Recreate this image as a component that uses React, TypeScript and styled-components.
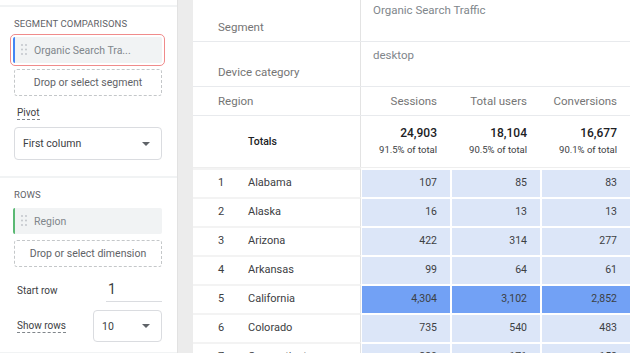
import { FC } from 'react';
import styled, { createGlobalStyle } from 'styled-components';

const GlobalStyle = createGlobalStyle`
  html, body {
    margin: 0;
    padding: 0;
    background: #ffffff;
    font-family: Roboto, 'Liberation Sans', Arial, sans-serif;
    overflow: hidden;
  }
`;

const Page = styled.div`
  display: flex;
  width: 630px;
  height: 353px;
  overflow: hidden;
`;

/* ---------- left settings panel ---------- */

const Panel = styled.aside`
  width: 177px;
  flex-shrink: 0;
  display: flex;
  flex-direction: column;
  background: #ffffff;
`;

const TopStrip = styled.div`
  height: 5px;
  flex-shrink: 0;
  border-bottom: 2px solid #f1f3f4;
`;

const Section = styled.section<{ bottom?: number }>`
  flex-shrink: 0;
  padding: 10px 15px ${({ bottom }) => bottom ?? 16}px 14px;
  border-bottom: 2px solid #f1f3f4;
  display: flex;
  flex-direction: column;
`;

const SectionTitle = styled.div`
  font-size: 9.5px;
  line-height: 14px;
  letter-spacing: 0.1px;
  color: #5f6368;
  text-transform: uppercase;
`;

const Chip = styled.div<{ bar: string; selected?: boolean }>`
  margin-top: 6px;
  height: 26px;
  margin-left: -1px;
  box-sizing: border-box;
  display: flex;
  align-items: center;
  gap: 7px;
  padding-left: 6px;
  background: #f1f3f4;
  border-left: 2px solid ${({ bar }) => bar};
  border-radius: 2px;
  outline: ${({ selected }) => (selected ? '1px solid #f08b8b' : 'none')};
  outline-offset: 2px;
  font-size: 10.5px;
  color: #80868b;
  white-space: nowrap;
`;

const DropZone = styled.div`
  margin-top: 6px;
  height: 27px;
  box-sizing: border-box;
  border: 1px dashed #c4c7c9;
  border-radius: 3px;
  display: flex;
  align-items: center;
  justify-content: center;
  font-size: 10.5px;
  color: #5f6368;
`;

const FieldLabel = styled.span<{ top?: number }>`
  align-self: flex-start;
  margin-top: ${({ top }) => top ?? 0}px;
  margin-left: 3px;
  font-size: 10px;
  line-height: 13px;
  color: #3c4043;
  border-bottom: 1px dashed #80868b;
`;

const ShowRowsLabel = styled(FieldLabel)`
  align-self: center;
`;

const PlainLabel = styled.span`
  margin-left: 3px;
  font-size: 10px;
  color: #3c4043;
`;

const SelectBox = styled.div<{ width?: number; height?: number }>`
  width: ${({ width }) => (width ? `${width}px` : 'auto')};
  height: ${({ height }) => height ?? 33}px;
  box-sizing: border-box;
  border: 1px solid #dadce0;
  border-radius: 4px;
  display: flex;
  align-items: center;
  justify-content: space-between;
  padding: 0 11px 0 8px;
  font-size: 10.5px;
  color: #3c4043;
`;

const PivotSelect = styled(SelectBox)`
  margin-top: 7px;
`;

const Caret = styled.span`
  width: 0;
  height: 0;
  border-left: 4px solid transparent;
  border-right: 4px solid transparent;
  border-top: 4px solid #5f6368;
`;

const FieldRow = styled.div<{ top: number }>`
  margin-top: ${({ top }) => top}px;
  display: flex;
  align-items: center;
  justify-content: space-between;
`;

const NumberInput = styled.div`
  width: 56px;
  height: 23px;
  box-sizing: border-box;
  padding-left: 2px;
  border-bottom: 1px solid #dadce0;
  font-size: 14px;
  line-height: 20px;
  color: #3c4043;
`;

const Gutter = styled.div`
  width: 15px;
  flex-shrink: 0;
  background: #ececec;
  border-left: 1px solid #e2e2e2;
`;

const DragHandle: FC = () => (
  <svg width="6" height="12" viewBox="0 0 6 12">
    {[1, 5.5, 10].map((y) =>
      [1, 5].map((x) => <circle key={`${x}-${y}`} cx={x} cy={y} r="0.9" fill="#bdc1c6" />)
    )}
  </svg>
);

/* ---------- pivot table ---------- */

const Table = styled.main`
  flex: 1;
  display: flex;
  flex-direction: column;
  background: #ffffff;
  color: #3c4043;
`;

const HeadRow = styled.div<{ height: number }>`
  display: grid;
  grid-template-columns: 168px 270px;
  height: ${({ height }) => height}px;
  border-bottom: 1px solid #e8eaed;
  flex-shrink: 0;
`;

const MetricRow = styled(HeadRow)`
  grid-template-columns: 168px 90px 90px 90px;
`;

const HeadLabel = styled.div<{ align?: string }>`
  display: flex;
  align-items: ${({ align }) => align ?? 'flex-end'};
  padding: 0 0 7px 25px;
  border-right: 1px solid #e3e3e3;
  font-size: 11.5px;
  color: #757575;
`;

const RegionLabel = styled(HeadLabel)`
  align-items: center;
  padding-bottom: 0;
`;

const HeadValue = styled.div<{ top: number }>`
  padding: ${({ top }) => top}px 0 0 12px;
  font-size: 11.5px;
  line-height: 14px;
  color: #80868b;
`;

const MetricName = styled.div`
  display: flex;
  align-items: center;
  justify-content: flex-end;
  padding: 0 14px 0 0;
  font-size: 11.5px;
  color: #757575;
`;

const TotalsRow = styled(MetricRow)`
  border-bottom: 1px solid #eeeeee;
`;

const TotalsLabel = styled.div`
  display: flex;
  align-items: center;
  padding-left: 55px;
  border-right: 1px solid #e3e3e3;
  font-size: 10.5px;
  font-weight: 500;
  color: #202124;
`;

const TotalCell = styled.div`
  display: flex;
  flex-direction: column;
  align-items: flex-end;
  justify-content: center;
  gap: 4px;
  padding: 0 14px 2px 0;
`;

const TotalValue = styled.span`
  font-size: 12px;
  font-weight: 500;
  color: #202124;
`;

const TotalShare = styled.span`
  font-size: 9.5px;
  color: #3c4043;
`;

const DataRow = styled.div`
  display: grid;
  grid-template-columns: 168px 90px 90px 90px;
  height: 29px;
  flex-shrink: 0;
`;

const RowHead = styled.div`
  display: flex;
  align-items: center;
  padding: 0 0 2px 25px;
  border-top: 2px solid #f3f3f3;
  border-right: 1px solid #e3e3e3;
  font-size: 11px;
  color: #3c4043;
`;

const RowIndex = styled.span`
  width: 30px;
`;

const ValueCell = styled.div<{ hot?: boolean }>`
  margin: 2px 1px 0 1px;
  display: flex;
  align-items: center;
  justify-content: flex-end;
  padding: 0 13px 2px 0;
  background: ${({ hot }) => (hot ? '#72a1f5' : '#dce6f8')};
  font-size: 10.5px;
  color: #3c4043;
`;

const rows = [
  { name: 'Alabama', values: ['107', '85', '83'] },
  { name: 'Alaska', values: ['16', '13', '13'] },
  { name: 'Arizona', values: ['422', '314', '277'] },
  { name: 'Arkansas', values: ['99', '64', '61'] },
  { name: 'California', values: ['4,304', '3,102', '2,852'], hot: true },
  { name: 'Colorado', values: ['735', '540', '483'] },
  { name: 'Connecticut', values: ['230', '171', '158'] },
];

const totals = [
  { value: '24,903', share: '91.5% of total' },
  { value: '18,104', share: '90.5% of total' },
  { value: '16,677', share: '90.1% of total' },
];

const App: FC = () => (
  <>
    <GlobalStyle />
    <Page>
      <Panel>
        <TopStrip />
        <Section>
          <SectionTitle>Segment comparisons</SectionTitle>
          <Chip bar="#4285f4" selected>
            <DragHandle />
            Organic Search Tra...
          </Chip>
          <DropZone>Drop or select segment</DropZone>
          <FieldLabel top={10}>Pivot</FieldLabel>
          <PivotSelect>
            First column
            <Caret />
          </PivotSelect>
        </Section>
        <Section bottom={10}>
          <SectionTitle>Rows</SectionTitle>
          <Chip bar="#5bb974">
            <DragHandle />
            Region
          </Chip>
          <DropZone>Drop or select dimension</DropZone>
          <FieldRow top={12}>
            <PlainLabel>Start row</PlainLabel>
            <NumberInput>1</NumberInput>
          </FieldRow>
          <FieldRow top={8}>
            <ShowRowsLabel>Show rows</ShowRowsLabel>
            <SelectBox width={69} height={32}>
              10
              <Caret />
            </SelectBox>
          </FieldRow>
        </Section>
      </Panel>
      <Gutter />
      <Table>
        <HeadRow height={41}>
          <HeadLabel>Segment</HeadLabel>
          <HeadValue top={3}>Organic Search Traffic</HeadValue>
        </HeadRow>
        <HeadRow height={44}>
          <HeadLabel>Device category</HeadLabel>
          <HeadValue top={6}>desktop</HeadValue>
        </HeadRow>
        <MetricRow height={28}>
          <RegionLabel>Region</RegionLabel>
          <MetricName>Sessions</MetricName>
          <MetricName>Total users</MetricName>
          <MetricName>Conversions</MetricName>
        </MetricRow>
        <TotalsRow height={51}>
          <TotalsLabel>Totals</TotalsLabel>
          {totals.map((t) => (
            <TotalCell key={t.value}>
              <TotalValue>{t.value}</TotalValue>
              <TotalShare>{t.share}</TotalShare>
            </TotalCell>
          ))}
        </TotalsRow>
        {rows.map((r, i) => (
          <DataRow key={r.name}>
            <RowHead>
              <RowIndex>{i + 1}</RowIndex>
              {r.name}
            </RowHead>
            {r.values.map((v, j) => (
              <ValueCell key={j} hot={r.hot}>
                {v}
              </ValueCell>
            ))}
          </DataRow>
        ))}
      </Table>
    </Page>
  </>
);

export default App;
